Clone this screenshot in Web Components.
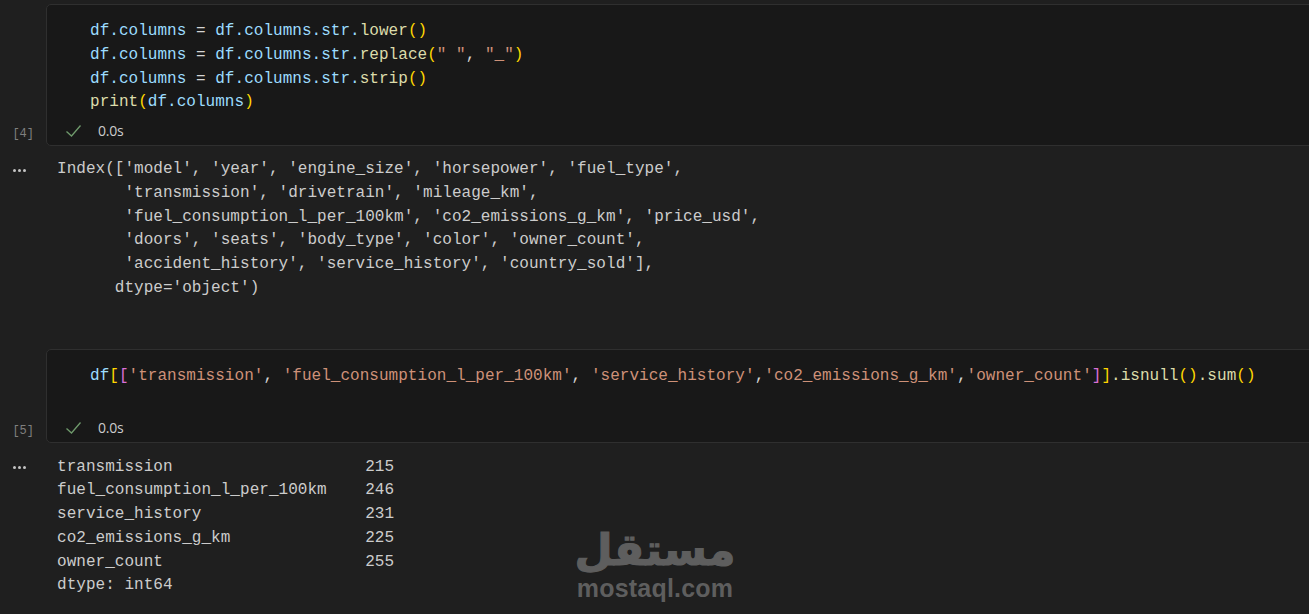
<!DOCTYPE html>
<html>
<head>
<meta charset="utf-8">
<title>Notebook</title>
<style>
  html, body { margin: 0; height: 100%; background: #1f1f1f; overflow: hidden; }
</style>
</head>
<body>
<nb-notebook>
<nb-cell count="4" time="0.0s"><span class="v">df.columns</span> = <span class="v">df.columns.str.</span><span class="f">lower</span><span class="b">()</span>
<span class="v">df.columns</span> = <span class="v">df.columns.str.</span><span class="f">replace</span><span class="b">(</span><span class="s">" "</span>, <span class="s">"_"</span><span class="b">)</span>
<span class="v">df.columns</span> = <span class="v">df.columns.str.</span><span class="f">strip</span><span class="b">()</span>
<span class="f">print</span><span class="b">(</span><span class="v">df.columns</span><span class="b">)</span></nb-cell>
<nb-output style="--top: 12px; --bottom: 48px">Index(['model', 'year', 'engine_size', 'horsepower', 'fuel_type',
       'transmission', 'drivetrain', 'mileage_km',
       'fuel_consumption_l_per_100km', 'co2_emissions_g_km', 'price_usd',
       'doors', 'seats', 'body_type', 'color', 'owner_count',
       'accident_history', 'service_history', 'country_sold'],
      dtype='object')</nb-output>
<nb-cell count="5" time="0.0s"><span class="v">df</span><span class="b">[</span><span class="p">[</span><span class="s">'transmission'</span>, <span class="s">'fuel_consumption_l_per_100km'</span>, <span class="s">'service_history'</span>,<span class="s">'co2_emissions_g_km'</span>,<span class="s">'owner_count'</span><span class="p">]</span><span class="b">]</span><span class="f">.isnull</span><span class="b">()</span><span class="f">.sum</span><span class="b">()</span>
 </nb-cell>
<nb-output style="--top: 12.5px">transmission                    215
fuel_consumption_l_per_100km    246
service_history                 231
co2_emissions_g_km              225
owner_count                     255
dtype: int64</nb-output>
</nb-notebook>
<nb-watermark></nb-watermark>

<script>
const MONO = '"Liberation Mono", "DejaVu Sans Mono", monospace';

class NbNotebook extends HTMLElement {
  constructor() {
    super();
    this.attachShadow({ mode: 'open' });
    this.shadowRoot.innerHTML = `
      <style>
        :host { display: flex; flex-direction: column; padding-top: 4px; }
      </style>
      <slot></slot>
    `;
  }
}

class NbCell extends HTMLElement {
  constructor() {
    super();
    this.attachShadow({ mode: 'open' });
    this.shadowRoot.innerHTML = `
      <style>
        :host { display: grid; grid-template-columns: 46px 1fr; margin-right: -12px; }
        #count {
          align-self: end;
          justify-self: end;
          margin: 0 12px 5px 0;
          font: 12px/14px ${MONO};
          color: #7f7f7f;
        }
        #box {
          background: #181818;
          border: 1px solid #2f2f2f;
          border-radius: 5px;
          padding: 15px 0 0 43px;
        }
        #code {
          font: 16px/23.75px ${MONO};
          white-space: pre;
          color: #d4d4d4;
          letter-spacing: 0.03px;
        }
        ::slotted(.v) { color: #9cdcfe; }
        ::slotted(.f) { color: #dcdcaa; }
        ::slotted(.b) { color: #ffd700; }
        ::slotted(.p) { color: #da70d6; }
        ::slotted(.s) { color: #ce9178; }
        #status {
          display: flex;
          align-items: center;
          height: 28px;
          margin: 2px 0 0 -24px;
          font: 14px/28px "Open Sans", "Noto Sans", sans-serif;
          letter-spacing: -0.2px;
          color: #cccccc;
        }
        svg { width: 18px; height: 14px; margin-right: 15px; margin-left: -1px; }
      </style>
      <div id="count"></div>
      <div id="box">
        <div id="code"><slot></slot></div>
        <div id="status">
          <svg viewBox="0 0 18 14" fill="none" stroke="#6f9a6c" stroke-width="1.3">
            <path d="M1.5 7.5 L6.5 12 L15.5 1.5"/>
          </svg>
          <span id="time"></span>
        </div>
      </div>
    `;
  }

  connectedCallback() {
    this.shadowRoot.querySelector('#count').textContent = '[' + this.getAttribute('count') + ']';
    this.shadowRoot.querySelector('#time').textContent = this.getAttribute('time');
  }
}

class NbOutput extends HTMLElement {
  constructor() {
    super();
    this.attachShadow({ mode: 'open' });
    this.shadowRoot.innerHTML = `
      <style>
        :host { display: flex; padding: var(--top, 12px) 0 var(--bottom, 0); }
        #more {
          width: 57px;
          box-sizing: border-box;
          padding-left: 13px;
          height: 24px;
          display: flex;
          gap: 2px;
          align-items: center;
        }
        #more i { width: 3px; height: 3px; border-radius: 50%; background: #c4c4c4; }
        #text {
          font: 16px/23.75px ${MONO};
          letter-spacing: 0.03px;
          white-space: pre;
          color: #cccccc;
        }
      </style>
      <div id="more"><i></i><i></i><i></i></div>
      <div id="text"><slot></slot></div>
    `;
  }
}

// stays on top of the notebook, like the site's stamp on the screenshot
class NbWatermark extends HTMLElement {
  constructor() {
    super();
    this.attachShadow({ mode: 'open' });
    this.shadowRoot.innerHTML = `
      <style>
        :host {
          position: absolute;
          left: 566px;
          top: 524px;
          width: 178px;
          display: flex;
          flex-direction: column;
          align-items: center;
          color: #5e5e5e;
          pointer-events: none;
        }
        #ar {
          font: bold 44px/51px "DejaVu Sans", sans-serif;
          -webkit-text-stroke: 1.2px #5e5e5e;
          height: 51px;
        }
        #en {
          font: bold 25px/26px "Liberation Sans", sans-serif;
          letter-spacing: 0.2px;
        }
      </style>
      <div id="ar" dir="rtl" lang="ar">مستقل</div>
      <div id="en">mostaql.com</div>
    `;
  }
}

customElements.define('nb-notebook', NbNotebook);
customElements.define('nb-cell', NbCell);
customElements.define('nb-output', NbOutput);
customElements.define('nb-watermark', NbWatermark);
</script>
</body>
</html>
